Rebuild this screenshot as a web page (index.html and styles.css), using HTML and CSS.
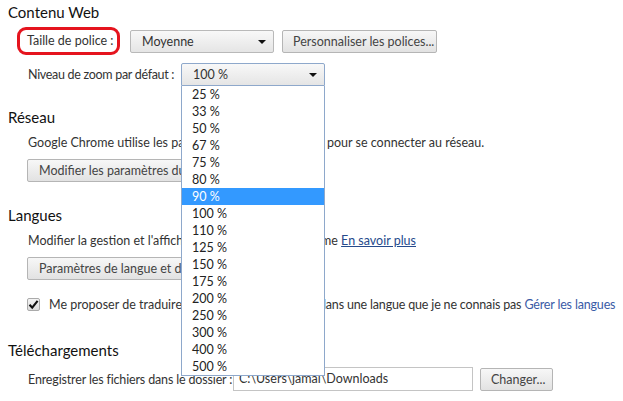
FILE: index.html
```html
<!DOCTYPE html>
<html lang="fr">
<head>
<meta charset="utf-8">
<link rel="stylesheet" href="styles.css">
</head>
<body>
<div class="page">
  <section class="sec first">
    <h3 class="title">Contenu Web</h3>
    <div class="row r-font">
      <span class="label annotated">Taille de police :</span>
      <div class="select font-select">Moyenne<span class="arrow"></span></div>
      <button class="btn custom">Personnaliser les polices...</button>
    </div>
    <div class="row r-zoom">
      <span class="label zoom-label">Niveau de zoom par défaut :</span>
      <div class="zoom-wrap">
        <div class="select open">100 %<span class="arrow"></span></div>
        <ul class="list">
          <li>25 %</li><li>33 %</li><li>50 %</li><li>67 %</li><li>75 %</li><li>80 %</li>
          <li class="hl">90 %</li><li>100 %</li><li>110 %</li><li>125 %</li><li>150 %</li>
          <li>175 %</li><li>200 %</li><li>250 %</li><li>300 %</li><li>400 %</li><li>500 %</li>
        </ul>
      </div>
    </div>
  </section>

  <section class="sec">
    <h3 class="title">Réseau</h3>
    <p class="text split"><span class="lead">Google Chrome utilise les paramètres proxy de votre système</span><span class="tail t-net">pour se connecter au réseau.</span></p>
    <button class="btn block">Modifier les paramètres du proxy...</button>
  </section>

  <section class="sec s-lang">
    <h3 class="title">Langues</h3>
    <p class="text split"><span class="lead">Modifier la gestion et l'affichage des langues dans Google Chrome</span><span class="tail t-lang">me <a class="more">En savoir plus</a></span></p>
    <button class="btn block">Paramètres de langue et de saisie...</button>
    <label class="check-row">
      <span class="checkbox"><svg width="11" height="11" viewBox="0 0 11 11"><path d="M1.5 5.8 L4.2 8.6 L9.6 1.8" fill="none" stroke="#111" stroke-width="2.1"/></svg></span>
      <span class="lead lead-check">Me proposer de traduire les pages qui ne sont pas rédigées</span><span class="tail t-check">dans une langue que je ne connais pas <a class="manage">Gérer les langues</a></span>
    </label>
  </section>

  <section class="sec last">
    <h3 class="title">Téléchargements</h3>
    <div class="row r-dl">
      <span class="label dl-label">Enregistrer les fichiers dans le dossier :</span>
      <div class="path">C:\Users\jamal\Downloads</div>
      <button class="btn change">Changer...</button>
    </div>
  </section>
</div>
</body>
</html>
```

FILE: styles.css
```css
* { box-sizing: border-box; }

body {
  margin: 0;
  background: #fff;
  font-family: Lato, "Open Sans", sans-serif;
  font-size: 12.5px;
  color: #333;
}

.page {
  padding: 2px 8px 0 8px;
}

.title {
  margin: 0;
  font-size: 15px;
  font-weight: normal;
  line-height: 20px;
  color: #111;
}

.sec { margin-top: 21px; }
.sec.first { margin-top: 0; }
.sec.s-lang { margin-top: 23px; }
.sec.last { margin-top: 27px; }

.row {
  display: flex;
  align-items: center;
  padding-left: 20px;
}

.r-font { margin-top: 5px; height: 28px; }
.r-zoom { margin-top: 8px; height: 23px; }
.r-dl { margin-top: 7px; height: 24px; }

.label { white-space: nowrap; flex: none; }

.annotated {
  margin-left: -11px;
  width: 103px;
  height: 28px;
  line-height: 22px;
  padding: 0 0 0 7px;
  border: 3px solid #e5141e;
  border-radius: 9px;
}

.zoom-label { width: 153px; letter-spacing: -0.3px; }
.dl-label { width: 205px; letter-spacing: -0.15px; }

.select {
  position: relative;
  flex: none;
  width: 144px;
  height: 23px;
  line-height: 21px;
  padding-left: 11px;
  border: 1px solid #b9b9b9;
  border-radius: 2px;
  background: linear-gradient(#f8f8f8, #e5e5e5);
  color: #333;
}

.font-select { margin-left: 10px; }

.select.open {
  border-color: #8ea8cb;
  border-radius: 2px 2px 0 0;
}

.arrow {
  position: absolute;
  right: 7px;
  top: 9px;
  width: 0;
  height: 0;
  border-left: 4px solid transparent;
  border-right: 4px solid transparent;
  border-top: 4px solid #111;
}

.btn {
  flex: none;
  height: 23px;
  padding: 0 10px;
  border: 1px solid #b5b5b5;
  border-radius: 2px;
  background: linear-gradient(#f7f7f7, #e2e2e2);
  font-family: inherit;
  font-size: 12.5px;
  color: #444;
  white-space: nowrap;
}

.custom { margin-left: 8px; width: 155px; }
.change { margin-left: 7px; width: 73px; }

.block {
  display: block;
  margin: 7px 0 0 19px;
  padding: 0 11px;
}

.zoom-wrap { position: relative; flex: none; }

.list {
  position: absolute;
  left: 0;
  top: 23px;
  z-index: 10;
  width: 144px;
  margin: 0;
  padding: 0;
  list-style: none;
  background: #fff;
  border: 1px solid #8ea8cb;
  border-top: 0;
  color: #222;
}

.list li {
  height: 17px;
  line-height: 17px;
  padding-left: 10px;
}

.list li.hl {
  background: #3399ff;
  color: #fff;
}

.text {
  margin: 7px 0 0 0;
  padding-left: 20px;
  line-height: 18px;
  white-space: nowrap;
}

.split { display: flex; }

.lead {
  display: block;
  flex: none;
  width: 153px;
  overflow: hidden;
  white-space: nowrap;
}

.tail { display: block; flex: none; white-space: nowrap; }
.t-net { margin-left: 146px; }
.t-lang { margin-left: 140px; }
.lead-check { width: 132px; }
.t-check { margin-left: 138px; letter-spacing: -0.17px; }

.more {
  color: #264a8c;
  text-decoration: underline;
}

.manage { color: #3a5ba6; }

.check-row {
  display: flex;
  align-items: center;
  height: 18px;
  margin-top: 15px;
  padding-left: 19px;
  white-space: nowrap;
}

.checkbox {
  display: flex;
  align-items: center;
  justify-content: center;
  flex: none;
  width: 13px;
  height: 13px;
  margin-right: 9px;
  border: 1px solid #aaa;
  border-radius: 2px;
  background: linear-gradient(#f4f4f4, #dcdcdc);
}

.path {
  flex: none;
  width: 240px;
  height: 24px;
  line-height: 22px;
  padding-left: 5px;
  border: 1px solid #c4c4c4;
  color: #333;
  white-space: nowrap;
  overflow: hidden;
}
```
